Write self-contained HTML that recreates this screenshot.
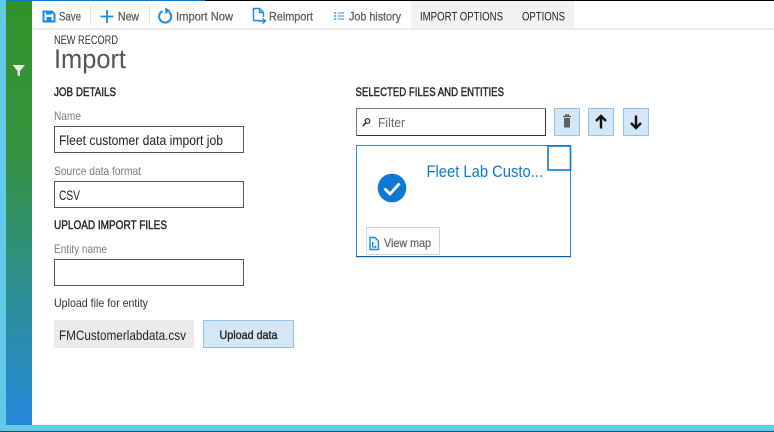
<!DOCTYPE html>
<html>
<head>
<meta charset="utf-8">
<style>
html,body{margin:0;padding:0;width:774px;height:432px;overflow:hidden;background:#fff}
svg{display:block}
text{font-family:"Liberation Sans",sans-serif;font-size:12px;fill:#222;filter:blur(.25px)}
.tb{fill:#5e5e5e;font-size:12px;stroke:#5e5e5e;stroke-width:.3px}
.tab{fill:#222;font-size:12px}
.h{font-size:12px;fill:#222;stroke:#222;stroke-width:.4px}
.lb{fill:#7a7a7a;font-size:12px}
.val{fill:#222;font-size:14px}
</style>
</head>
<body>
<svg width="774" height="432" viewBox="0 0 774 432" xmlns="http://www.w3.org/2000/svg">
<defs>
<linearGradient id="g" x1="0" y1="0" x2="0" y2="1">
<stop offset="0" stop-color="#339129"/>
<stop offset=".35" stop-color="#36923f"/>
<stop offset=".7" stop-color="#2d8f95"/>
<stop offset="1" stop-color="#2588dc"/>
</linearGradient>
</defs>
<rect width="774" height="432" fill="#fff"/>
<!-- window chrome -->
<rect x="0" y="0" width="774" height="1" fill="#000"/>
<rect x="0" y="0" width="205" height="1" fill="#0078d7"/>
<rect x="0" y="0" width="6" height="432" fill="#62c9e8"/>
<rect x="6" y="1" width="26" height="424" fill="url(#g)"/>
<rect x="0" y="425" width="774" height="6" fill="#62c9e8"/>
<rect x="0" y="431" width="774" height="1" fill="#1d4f5c"/>
<path d="M12.500 65H25L20 71V76.500L17.500 75V71Z" fill="#e3f1e2"/>
<!-- toolbar -->
<rect x="32" y="28" width="742" height="2" fill="#eaeaea"/>
<rect x="411" y="1" width="163" height="27" fill="#f2f2f2"/>
<rect x="90" y="6" width="1" height="18" fill="#e3e3e3"/>
<rect x="149" y="6" width="1" height="18" fill="#e3e3e3"/>
<!-- save -->
<path d="M43.500 11.500H52L54.500 14V21.500H43.500Z" fill="none" stroke="#1e88e5" stroke-width="2"/>
<rect x="46" y="11" width="6" height="3.500" fill="#1e88e5"/>
<rect x="46.500" y="17" width="5" height="4" fill="#1e88e5"/>
<text class="tb" x="59" y="20.500" textLength="22" lengthAdjust="spacingAndGlyphs">Save</text>
<!-- new -->
<path d="M107 10V23M100.500 16.500H113.500" stroke="#1e88e5" stroke-width="1.800" fill="none"/>
<text class="tb" x="118" y="20.500" textLength="21" lengthAdjust="spacingAndGlyphs">New</text>
<!-- import now -->
<path d="M169 12A6 6 0 1 1 162.500 11.200" fill="none" stroke="#1e88e5" stroke-width="2"/>
<path d="M165 7.500L165.500 14L170.500 10.500Z" fill="#1e88e5"/>
<text class="tb" x="176" y="20.500" textLength="57" lengthAdjust="spacingAndGlyphs">Import Now</text>
<!-- reimport -->
<path d="M259 20.500H253.500V8.500H259.500L263.500 12.500V17M259.500 8.500V12.500H263.500" fill="none" stroke="#1e88e5" stroke-width="1.400"/>
<path d="M258 21H265M262.500 18.500L265.500 21L262.500 23.500" fill="none" stroke="#1e88e5" stroke-width="1.400"/>
<text class="tb" x="269" y="20.500" textLength="44" lengthAdjust="spacingAndGlyphs">Reimport</text>
<!-- job history -->
<path d="M334 13H336M334 16H336M334 19H336" stroke="#1e88e5" stroke-width="1.300"/>
<path d="M337.500 13H344M337.500 16H344M337.500 19H344" stroke="#5aa9ee" stroke-width="1.300"/>
<text class="tb" x="349" y="20.500" textLength="52" lengthAdjust="spacingAndGlyphs">Job history</text>
<text class="tab" x="420" y="20.500" textLength="83" lengthAdjust="spacingAndGlyphs">IMPORT OPTIONS</text>
<text class="tab" x="522" y="20.500" textLength="43" lengthAdjust="spacingAndGlyphs">OPTIONS</text>
<!-- heading -->
<text x="54" y="44" style="font-size:12px;fill:#333" textLength="64" lengthAdjust="spacingAndGlyphs">NEW RECORD</text>
<text x="54" y="68" style="font-size:27px;fill:#555" textLength="72" lengthAdjust="spacingAndGlyphs">Import</text>
<text class="h" x="54" y="96" textLength="62" lengthAdjust="spacingAndGlyphs">JOB DETAILS</text>
<text class="h" x="355.500" y="96" textLength="148.500" lengthAdjust="spacingAndGlyphs">SELECTED FILES AND ENTITIES</text>
<!-- form -->
<text class="lb" x="54" y="120" textLength="27" lengthAdjust="spacingAndGlyphs">Name</text>
<rect x="54.500" y="126.500" width="189" height="26" fill="#fff" stroke="#555"/>
<text class="val" x="59" y="145" textLength="164" lengthAdjust="spacingAndGlyphs">Fleet customer data import job</text>
<text class="lb" x="54" y="175" textLength="87" lengthAdjust="spacingAndGlyphs">Source data format</text>
<rect x="54.500" y="181.500" width="189" height="26" fill="#fff" stroke="#555"/>
<text class="val" x="59" y="200" textLength="21" lengthAdjust="spacingAndGlyphs">CSV</text>
<text class="h" x="54" y="229" textLength="113" lengthAdjust="spacingAndGlyphs">UPLOAD IMPORT FILES</text>
<text class="lb" x="54" y="253" textLength="53" lengthAdjust="spacingAndGlyphs">Entity name</text>
<rect x="54.500" y="259.500" width="189" height="26" fill="#fff" stroke="#555"/>
<text x="54" y="307" style="font-size:12px;fill:#333" textLength="94" lengthAdjust="spacingAndGlyphs">Upload file for entity</text>
<rect x="54" y="320" width="140" height="28" fill="#ebebeb"/>
<text class="val" x="59" y="340" textLength="127" lengthAdjust="spacingAndGlyphs">FMCustomerlabdata.csv</text>
<rect x="203.500" y="320.500" width="90" height="27" fill="#d5e6f7" stroke="#90c2ec"/>
<text x="219.500" y="339" style="font-size:12px;stroke:#222;stroke-width:.35px;fill:#222" textLength="58" lengthAdjust="spacingAndGlyphs">Upload data</text>
<!-- filter -->
<path d="M356.500 135.500V108.500H545.500" fill="none" stroke="#777"/>
<path d="M545.500 108.500V135.500H356.500" fill="none" stroke="#333"/>
<circle cx="367.500" cy="121" r="2.300" fill="none" stroke="#222" stroke-width="1.200"/>
<path d="M365.700 123L362.800 126" stroke="#222" stroke-width="1.400"/>
<text x="378" y="127" style="font-size:13px;fill:#666" textLength="27" lengthAdjust="spacingAndGlyphs">Filter</text>
<!-- buttons -->
<rect x="554.500" y="108.500" width="25" height="27" fill="#d5e6f7" stroke="#90c2ec"/>
<rect x="588.500" y="108.500" width="25" height="27" fill="#d5e6f7" stroke="#90c2ec"/>
<rect x="623.500" y="108.500" width="25" height="27" fill="#d5e6f7" stroke="#90c2ec"/>
<path d="M563 116.500H571M565.500 116V115H568.500V116" fill="none" stroke="#555" stroke-width="1.200"/>
<path d="M564 118H570V127.500H564Z" fill="#5f5f5f"/>
<path d="M601 128.500V116M596 121L601 116L606 121" fill="none" stroke="#111" stroke-width="2.400"/>
<path d="M636 115.500V128M631 123L636 128L641 123" fill="none" stroke="#111" stroke-width="2.400"/>
<!-- card -->
<rect x="356.500" y="145.500" width="214" height="111" fill="#fff" stroke="#3d87c8"/>
<rect x="356" y="256" width="215" height="1.200" fill="#0a5fb0"/>
<rect x="548" y="146" width="22.500" height="24" fill="#fff" stroke="#0f78d4" stroke-width="1.600"/>
<text x="426.500" y="177" style="font-size:17px;fill:#0f78d4" textLength="116.500" lengthAdjust="spacingAndGlyphs">Fleet Lab Custo...</text>
<circle cx="392" cy="188" r="14.300" fill="#0f78d4"/>
<path d="M384.500 188.500L390 194L399.500 183.500" fill="none" stroke="#fff" stroke-width="2.800"/>
<rect x="366.500" y="227.500" width="73" height="27" fill="#fff" stroke="#aaa" stroke-width="1" stroke-dasharray="1 1"/>
<path d="M370 237.500H375L378.500 241V249.500H370Z" fill="#eaf4fe" stroke="#1e88e5" stroke-width="1.400"/>
<path d="M372.500 242V247H376.500M372 243H374M375.500 246V248" stroke="#1e88e5" stroke-width="1" fill="none"/>
<text x="384" y="247" style="font-size:12px;stroke:#666;stroke-width:.25px;fill:#666" textLength="47" lengthAdjust="spacingAndGlyphs">View map</text>
</svg>
</body>
</html>
